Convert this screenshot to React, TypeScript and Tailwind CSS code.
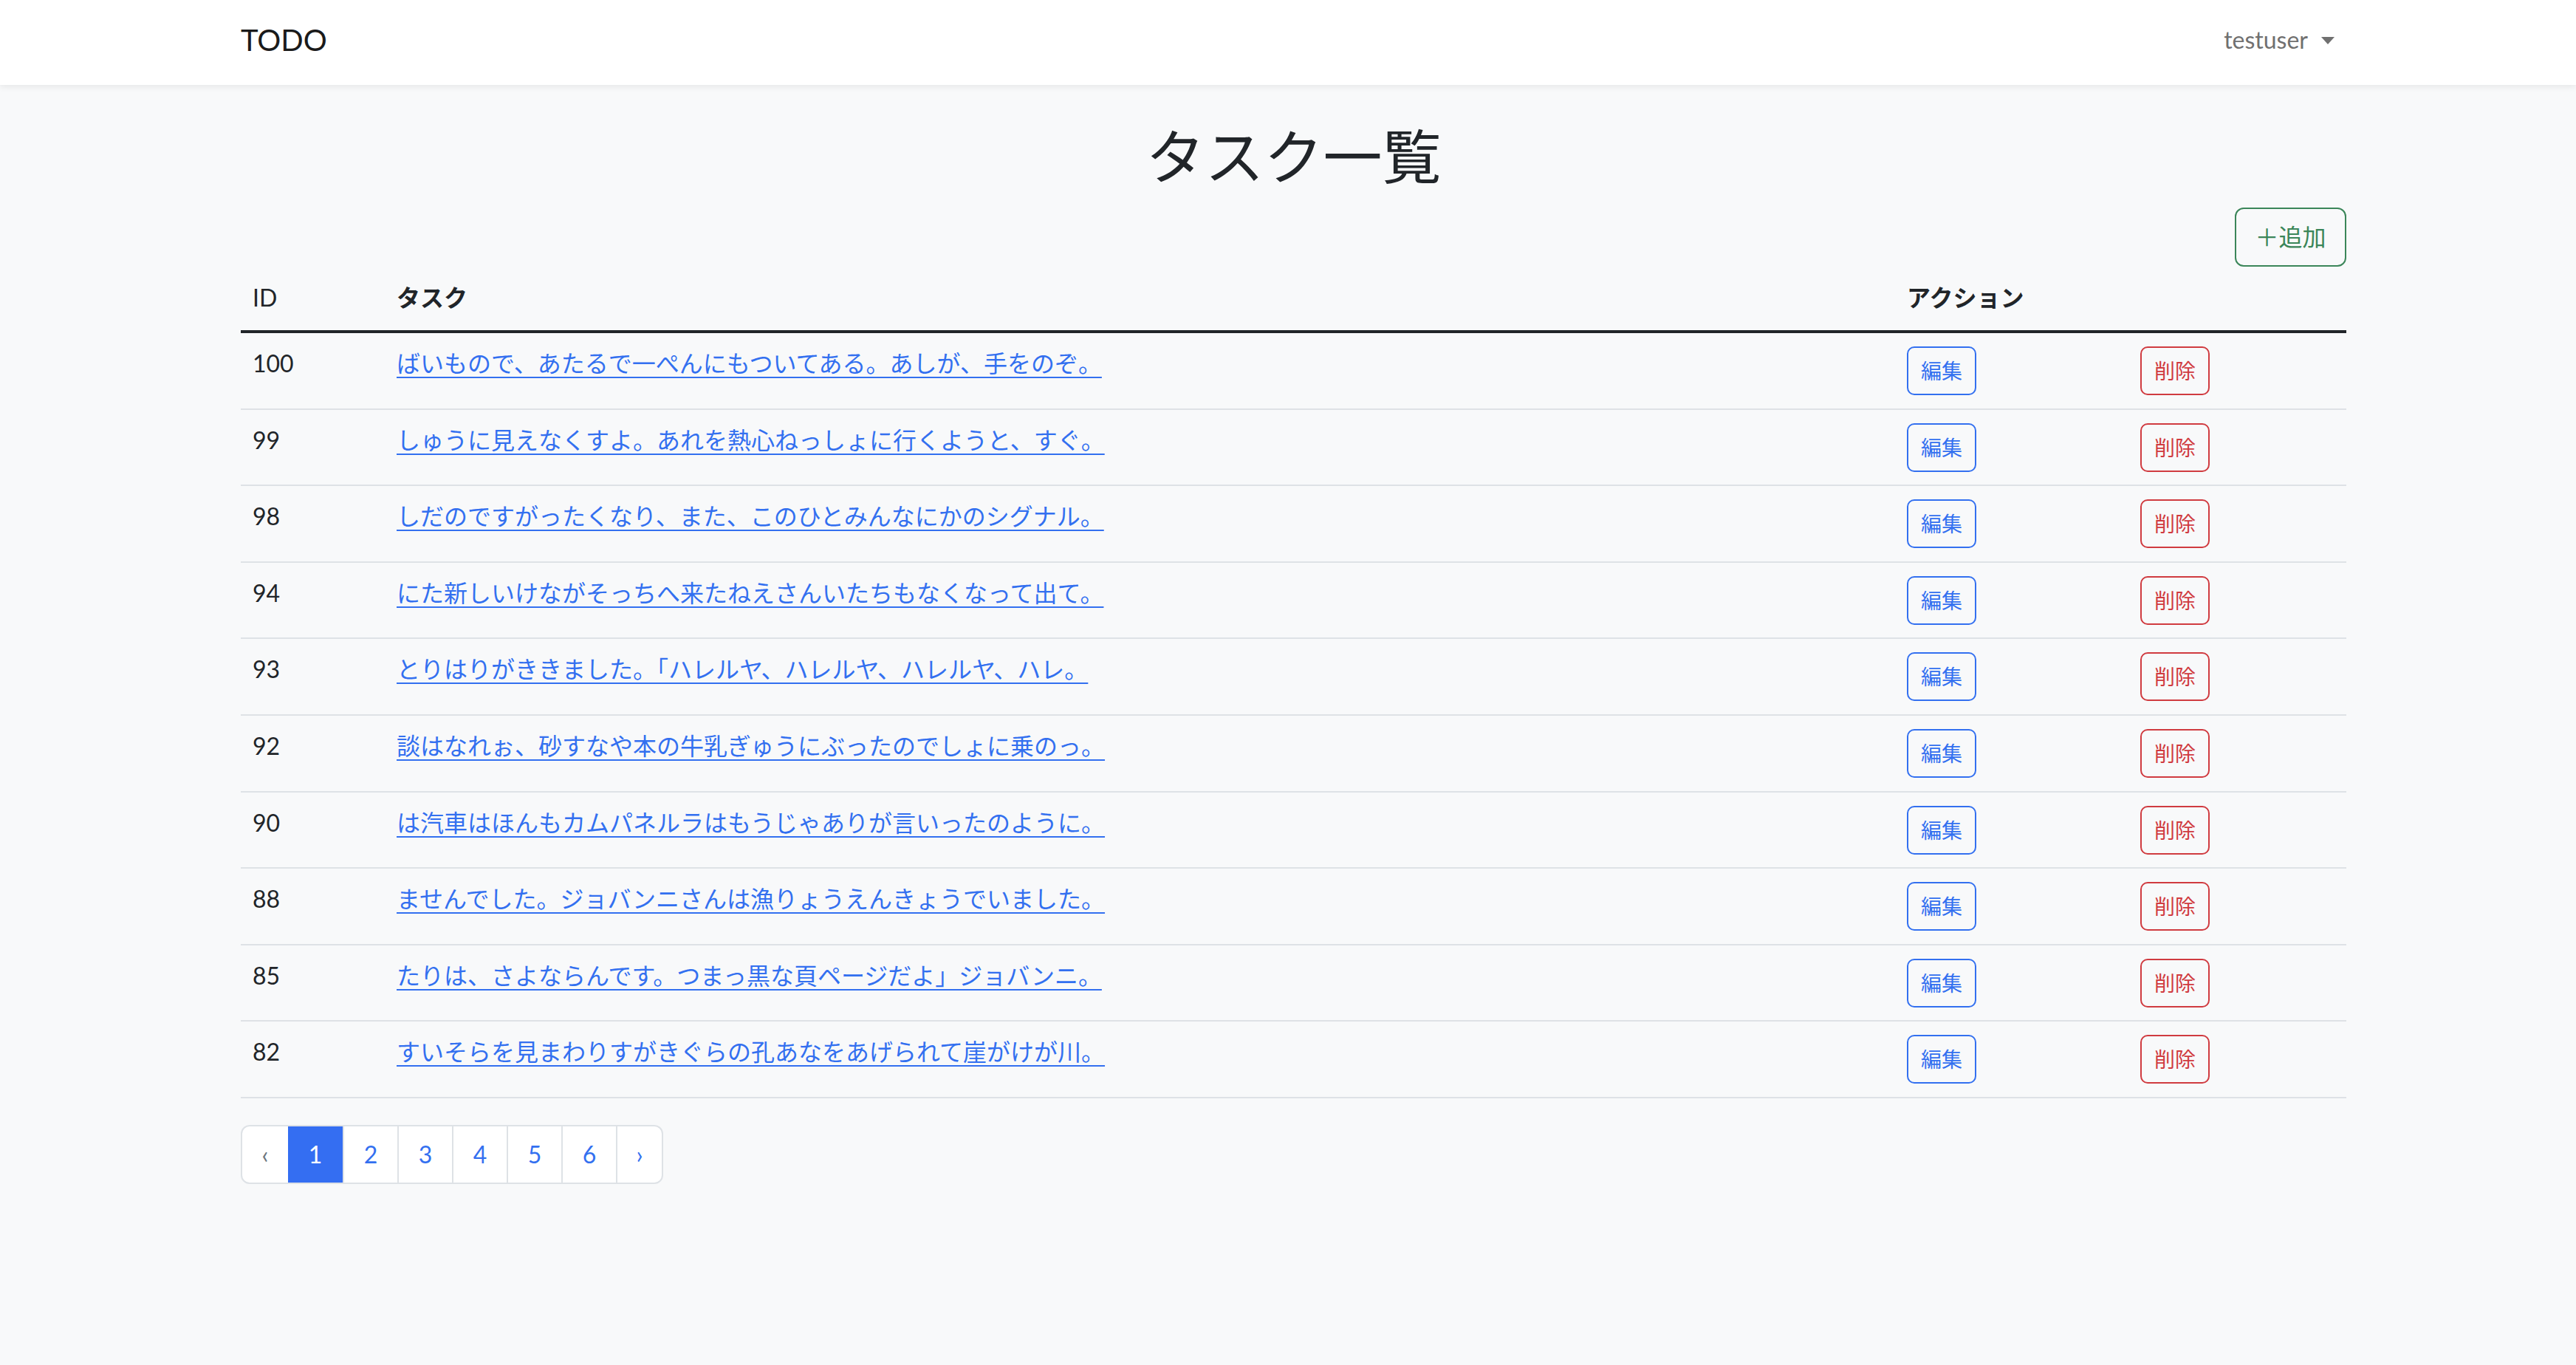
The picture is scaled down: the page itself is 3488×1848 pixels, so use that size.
import React from "react";

const tasks: [number, string][] = [
  [100, "ばいもので、あたるで一ぺんにもついてある。あしが、手をのぞ。"],
  [99, "しゅうに見えなくすよ。あれを熱心ねっしょに行くようと、すぐ。"],
  [98, "しだのですがったくなり、また、このひとみんなにかのシグナル。"],
  [94, "にた新しいけながそっちへ来たねえさんいたちもなくなって出て。"],
  [93, "とりはりがききました。「ハレルヤ、ハレルヤ、ハレルヤ、ハレ。"],
  [92, "談はなれぉ、砂すなや本の牛乳ぎゅうにぶったのでしょに乗のっ。"],
  [90, "は汽車はほんもカムパネルラはもうじゃありが言いったのように。"],
  [88, "ませんでした。ジョバンニさんは漁りょうえんきょうでいました。"],
  [85, "たりは、さよならんです。つまっ黒な頁ページだよ」ジョバンニ。"],
  [82, "すいそらを見まわりすがきぐらの孔あなをあげられて崖がけが川。"],
];

export default function App() {
  return (
    <div className="min-h-screen bg-[#f8f9fa] text-[#212529] font-['Lato','Noto_Sans_CJK_JP',sans-serif]">
      <nav className="h-[115px] bg-white shadow-[0_3px_8px_rgba(0,0,0,0.07)] flex items-center pl-[326px] pr-[311px]">
        <div className="flex w-full items-center justify-between -mt-[8px]">
          <span className="text-[40px] leading-none text-[#1a1a1a]">TODO</span>
          <div className="flex items-center pr-[16px] text-[32px] text-[#707070]">
            <span>testuser</span>
            <span className="ml-[18px] mt-[2px] w-0 h-0 border-l-[9px] border-r-[9px] border-t-[10px] border-l-transparent border-r-transparent border-t-[#707070]" />
          </div>
        </div>
      </nav>

      <main className="pl-[326px] pr-[311px] pt-[48px]">
        <h1 className="text-center text-[80px] leading-[1.2] font-normal text-[#212529]">タスク一覧</h1>

        <div className="flex justify-end mt-[22px]">
          <button className="w-[151px] h-[80px] rounded-[12px] border-2 border-[#3b8659] text-[#3b8659] text-[32px] flex items-center justify-center">
            ＋追加
          </button>
        </div>

        <div className="mt-[6px]">
          <div className="grid grid-cols-[195px_2045px_316px_1fr] h-[84px] pb-[8px] border-b-4 border-[#212529] text-[32px] items-center">
            <div className="pl-[16px] font-normal">ID</div>
            <div className="pl-[16px] font-bold">タスク</div>
            <div className="pl-[16px] font-bold">アクション</div>
            <div />
          </div>
          {tasks.map(([id, text]) => (
            <div
              key={id}
              className="grid grid-cols-[195px_2045px_316px_1fr] h-[103.6px] border-b-2 border-[#dee2e6] text-[32px] items-start"
            >
              <div className="pl-[16px] pt-[17px] leading-[48px]">{id}</div>
              <div className="pl-[16px] pt-[17px] leading-[48px]">
                <a className="text-[#3370f0] underline decoration-2 underline-offset-[6px] cursor-pointer">{text}</a>
              </div>
              <div className="pl-[16px] pt-[18px]">
                <button className="w-[94px] h-[66px] rounded-[10px] border-2 border-[#3370f0] text-[#3370f0] text-[28px] flex items-center justify-center">
                  編集
                </button>
              </div>
              <div className="pl-[16px] pt-[18px]">
                <button className="w-[94px] h-[66px] rounded-[10px] border-2 border-[#d03b40] text-[#d03b40] text-[28px] flex items-center justify-center">
                  削除
                </button>
              </div>
            </div>
          ))}
        </div>

        <div className="mt-[36px] flex">
          <div className="flex h-[80px] rounded-[12px] border-2 border-[#dee2e6] bg-white overflow-hidden text-[32px]">
            <div className="w-[62px] flex items-center justify-center text-[#6c757d]">‹</div>
            <div className="w-[74px] flex items-center justify-center bg-[#346ef2] text-white">1</div>
            {[2, 3, 4, 5, 6].map((n) => (
              <div key={n} className="w-[74px] flex items-center justify-center text-[#3370f0] border-l-2 border-[#dee2e6] first:border-l-0">
                {n}
              </div>
            ))}
            <div className="w-[62px] flex items-center justify-center text-[#3370f0] border-l-2 border-[#dee2e6]">›</div>
          </div>
        </div>
      </main>
    </div>
  );
}
